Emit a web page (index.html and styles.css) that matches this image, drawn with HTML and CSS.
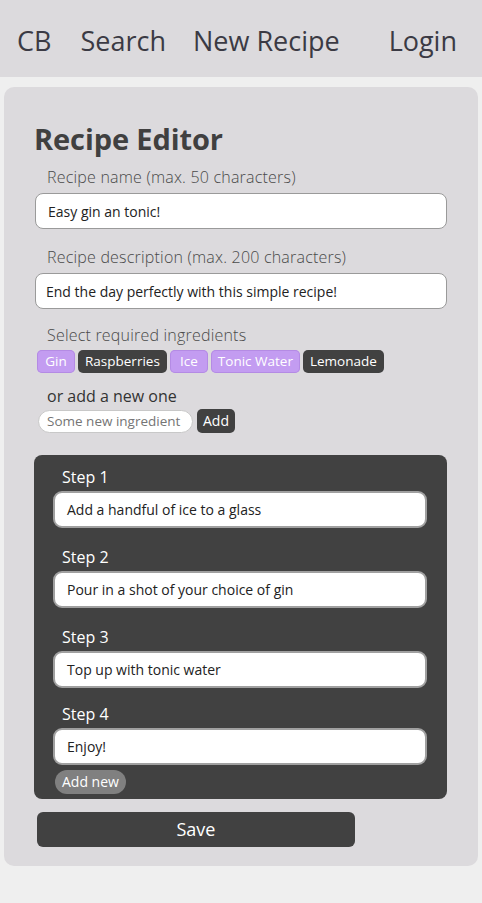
FILE: index.html
```html
<!DOCTYPE html>
<html>
<head>
<meta charset="utf-8">
<link rel="stylesheet" href="styles.css">
</head>
<body>
<header class="nav">
  <a class="nav-item brand">CB</a>
  <a class="nav-item">Search</a>
  <a class="nav-item">New Recipe</a>
  <a class="nav-item login">Login</a>
</header>
<main class="card">
  <h1 class="title">Recipe Editor</h1>
  <div class="label">Recipe name (max. 50 characters)</div>
  <div class="field">Easy gin an tonic!</div>
  <div class="label gap">Recipe description (max. 200 characters)</div>
  <div class="field desc">End the day perfectly with this simple recipe!</div>
  <div class="label gap2">Select required ingredients</div>
  <div class="chips">
    <span class="chip on">Gin</span>
    <span class="chip">Raspberries</span>
    <span class="chip on">Ice</span>
    <span class="chip on">Tonic Water</span>
    <span class="chip">Lemonade</span>
  </div>
  <div class="sub">or add a new one</div>
  <div class="add-row">
    <span class="pill">Some new ingredient</span>
    <span class="add-btn">Add</span>
  </div>
  <section class="steps">
    <div class="step">
      <div class="step-label">Step 1</div>
      <div class="step-field">Add a handful of ice to a glass</div>
    </div>
    <div class="step">
      <div class="step-label">Step 2</div>
      <div class="step-field">Pour in a shot of your choice of gin</div>
    </div>
    <div class="step">
      <div class="step-label">Step 3</div>
      <div class="step-field">Top up with tonic water</div>
    </div>
    <div class="step last">
      <div class="step-label">Step 4</div>
      <div class="step-field">Enjoy!</div>
    </div>
    <span class="add-new">Add new</span>
  </section>
  <div class="save">Save</div>
</main>
</body>
</html>
```
FILE: styles.css
```css
* { box-sizing: border-box; }
html, body { margin: 0; padding: 0; }
body {
  background: #efefef;
  font-family: "Open Sans", "Liberation Sans", sans-serif;
  width: 482px;
  height: 903px;
  overflow: hidden;
}
.nav {
  height: 77px;
  background: #dcdadd;
  display: flex;
  align-items: center;
  padding: 4px 25px 0 17px;
}
.nav-item {
  font-size: 27px;
  color: #3b3a44;
  margin-right: 27px;
  line-height: 36px;
}
.nav-item.brand { margin-right: 29px; }
.nav-item.login { margin-left: auto; margin-right: 0; }
.card {
  margin: 10px 4px 0;
  background: #dcdadd;
  border-radius: 10px;
  padding: 34px 31px 19px 30px;
}
.title {
  margin: 0;
  font-size: 29px;
  line-height: 36px;
  font-weight: 700;
  color: #404040;
  letter-spacing: -0.1px;
}
.label {
  margin-top: 10px;
  padding-left: 13px;
  font-size: 16px;
  line-height: 20px;
  font-weight: 300;
  color: #4a4a4a;
  letter-spacing: 0.2px;
}
.label.gap { margin-top: 18px; }
.label.gap2 { margin-top: 16px; }
.field {
  margin-top: 6px;
  margin-left: 1px;
  height: 36px;
  background: #fff;
  border: 1px solid #9a9a9a;
  border-radius: 8px;
  padding: 0 12px;
  display: flex;
  align-items: center;
  font-size: 14px;
  color: #222;
}
.field.desc { padding-left: 10px; }
.chips {
  margin-top: 5px;
  margin-left: 3px;
  display: flex;
  gap: 3px;
}
.chip {
  height: 23px;
  min-width: 38px;
  padding: 0 7px;
  border-radius: 5px;
  background: #414141;
  color: #fff;
  font-size: 13.5px;
  line-height: 23px;
  text-align: center;
}
.chip.on {
  background: #c39cf1;
  box-shadow: inset 0 0 0 1px #b48be4;
}
.sub {
  margin-top: 13px;
  padding-left: 13px;
  font-size: 16px;
  line-height: 20px;
  color: #333;
}
.add-row {
  margin-top: 3px;
  margin-left: 4px;
  display: flex;
  align-items: center;
  gap: 4px;
}
.pill {
  width: 155px;
  height: 23px;
  background: #fff;
  border: 1px solid #c8c8c8;
  border-radius: 12px;
  padding-left: 8px;
  font-size: 13.5px;
  line-height: 21px;
  color: #757575;
}
.add-btn {
  height: 24px;
  padding: 0 6px;
  background: #414141;
  color: #fff;
  border-radius: 5px;
  font-size: 14px;
  line-height: 24px;
}
.steps {
  margin-top: 22px;
  background: #414141;
  border-radius: 8px;
  padding: 12px 20px 6px 19px;
  height: 344px;
}
.step + .step { margin-top: 19px; }
.step.last { margin-top: 16px; }
.step-label {
  padding-left: 9px;
  font-size: 16px;
  line-height: 20px;
  color: #fff;
}
.step-field {
  margin-top: 4px;
  height: 37px;
  background: #fff;
  border: 2px solid #a0a0a0;
  border-radius: 9px;
  padding: 0 12px;
  display: flex;
  align-items: center;
  font-size: 14px;
  color: #222;
}
.add-new {
  display: inline-block;
  margin-top: 5px;
  margin-left: 2px;
  height: 24px;
  padding: 0 7px;
  border-radius: 12px;
  background: #808080;
  color: #fff;
  font-size: 14px;
  line-height: 24px;
}
.save {
  margin-top: 13px;
  margin-left: 3px;
  width: 318px;
  height: 35px;
  background: #414141;
  border-radius: 6px;
  color: #fff;
  font-size: 18px;
  line-height: 35px;
  text-align: center;
}
```
